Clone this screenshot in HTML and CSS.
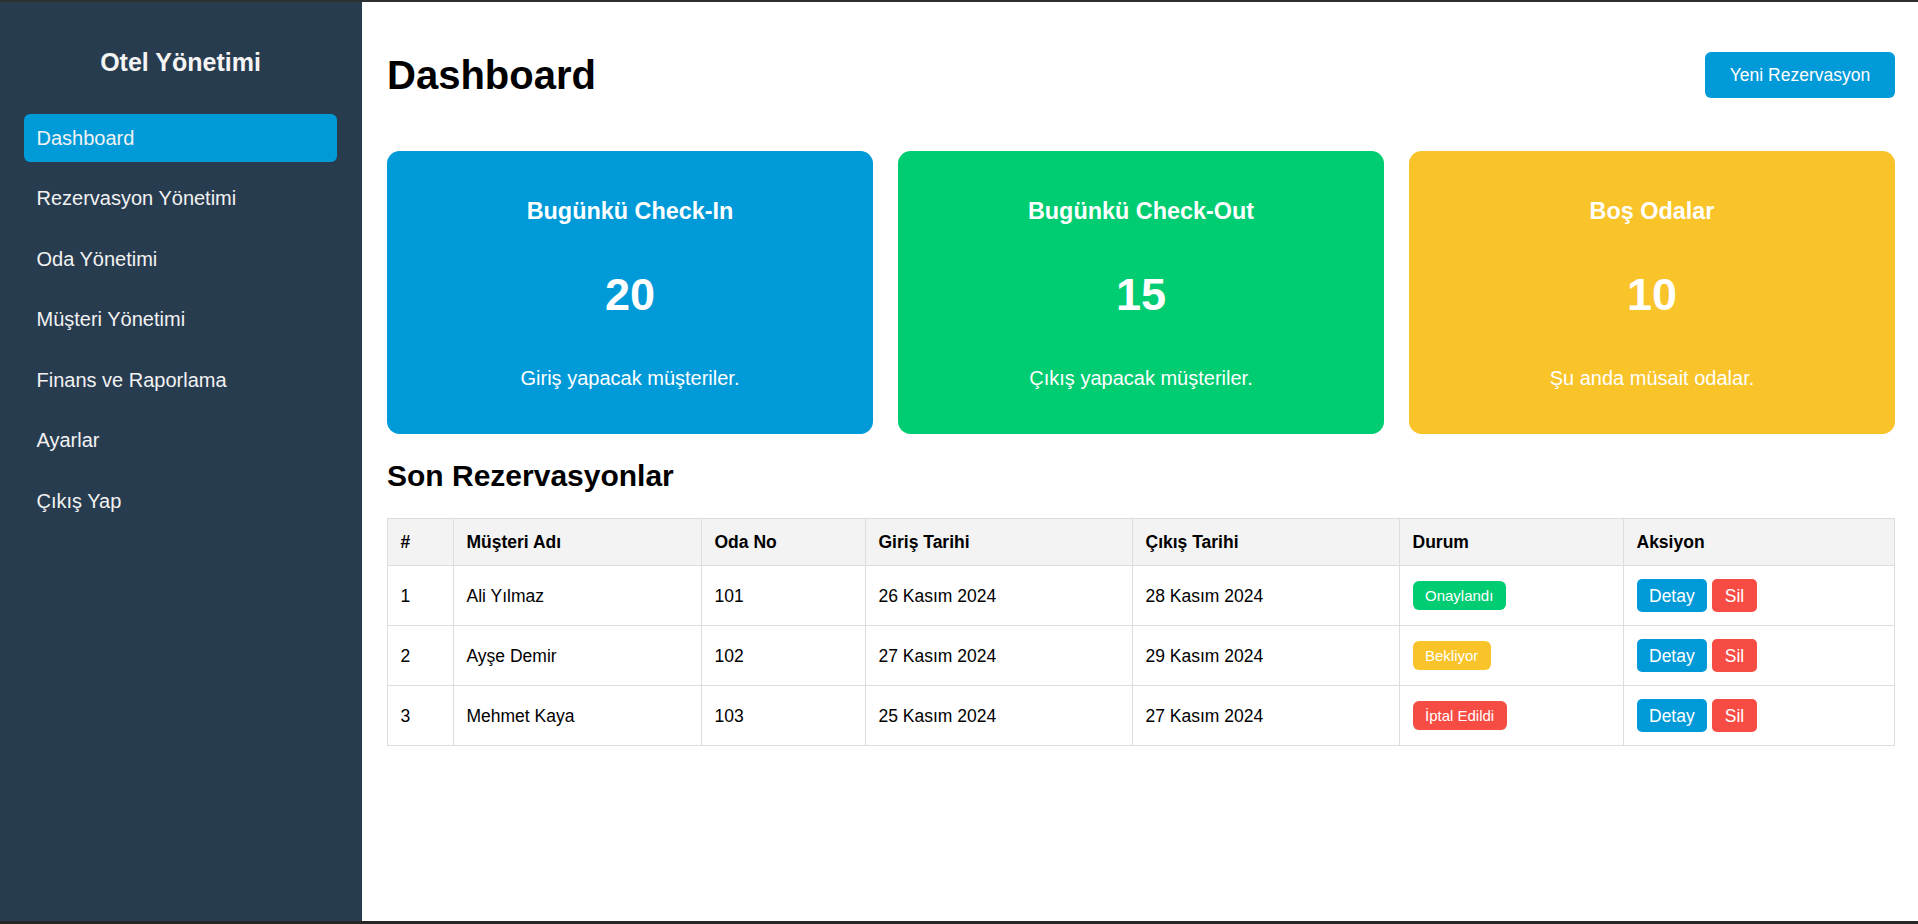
FILE: index.html
```html
<!DOCTYPE html>
<html lang="tr">
<head>
<meta charset="utf-8">
<title>Otel Yönetimi</title>
<link rel="stylesheet" href="styles.css">
</head>
<body>
<div class="app">
  <aside class="sidebar">
    <h2 class="brand">Otel Yönetimi</h2>
    <ul class="nav">
      <li class="nav-item active">Dashboard</li>
      <li class="nav-item">Rezervasyon Yönetimi</li>
      <li class="nav-item">Oda Yönetimi</li>
      <li class="nav-item">Müşteri Yönetimi</li>
      <li class="nav-item">Finans ve Raporlama</li>
      <li class="nav-item">Ayarlar</li>
      <li class="nav-item">Çıkış Yap</li>
    </ul>
  </aside>
  <main class="main">
    <header class="page-header">
      <h1 class="page-title">Dashboard</h1>
      <button class="btn-primary">Yeni Rezervasyon</button>
    </header>
    <section class="cards">
      <div class="card card-blue">
        <h3 class="card-title">Bugünkü Check-In</h3>
        <div class="card-number">20</div>
        <p class="card-desc">Giriş yapacak müşteriler.</p>
      </div>
      <div class="card card-green">
        <h3 class="card-title">Bugünkü Check-Out</h3>
        <div class="card-number">15</div>
        <p class="card-desc">Çıkış yapacak müşteriler.</p>
      </div>
      <div class="card card-yellow">
        <h3 class="card-title">Boş Odalar</h3>
        <div class="card-number">10</div>
        <p class="card-desc">Şu anda müsait odalar.</p>
      </div>
    </section>
    <h2 class="section-title">Son Rezervasyonlar</h2>
    <table class="res-table">
      <colgroup>
        <col class="c-num"><col class="c-name"><col class="c-room"><col class="c-in"><col class="c-out"><col class="c-status"><col class="c-act">
      </colgroup>
      <thead>
        <tr><th>#</th><th>Müşteri Adı</th><th>Oda No</th><th>Giriş Tarihi</th><th>Çıkış Tarihi</th><th>Durum</th><th>Aksiyon</th></tr>
      </thead>
      <tbody>
        <tr>
          <td>1</td><td>Ali Yılmaz</td><td>101</td><td>26 Kasım 2024</td><td>28 Kasım 2024</td>
          <td><span class="badge badge-green">Onaylandı</span></td>
          <td><button class="btn-sm btn-blue">Detay</button><button class="btn-sm btn-red">Sil</button></td>
        </tr>
        <tr>
          <td>2</td><td>Ayşe Demir</td><td>102</td><td>27 Kasım 2024</td><td>29 Kasım 2024</td>
          <td><span class="badge badge-yellow">Bekliyor</span></td>
          <td><button class="btn-sm btn-blue">Detay</button><button class="btn-sm btn-red">Sil</button></td>
        </tr>
        <tr>
          <td>3</td><td>Mehmet Kaya</td><td>103</td><td>25 Kasım 2024</td><td>27 Kasım 2024</td>
          <td><span class="badge badge-red">İptal Edildi</span></td>
          <td><button class="btn-sm btn-blue">Detay</button><button class="btn-sm btn-red">Sil</button></td>
        </tr>
      </tbody>
    </table>
  </main>
</div>
</body>
</html>
```

FILE: styles.css
```css
* { box-sizing: border-box; }

html, body {
  margin: 0;
  padding: 0;
  font-family: "Liberation Sans", Arial, sans-serif;
  background: #ffffff;
  color: #000000;
}

.app {
  display: flex;
  height: 924px;
  border-top: 2px solid #2e2f31;
  border-bottom: 3px solid #262626;
}

.sidebar {
  width: 362px;
  flex: none;
  background: #283c50;
  padding: 45px 25px 0 24px;
  color: #ffffff;
}

.brand {
  margin: 0 0 37px;
  font-size: 25px;
  line-height: 30px;
  font-weight: bold;
  text-align: center;
  color: #f4f4f4;
}

.nav {
  list-style: none;
  margin: 0;
  padding: 0;
}

.nav-item {
  font-size: 20px;
  line-height: 23px;
  padding: 12.5px 12.5px;
  margin-bottom: 12.5px;
  border-radius: 6px;
  color: #f2f2f2;
}

.nav-item.active {
  background: #009ad9;
}

.main {
  flex: 1;
  padding: 50px 24px 0 25px;
}

.page-header {
  display: flex;
  justify-content: space-between;
  align-items: center;
  height: 46px;
}

.page-title {
  margin: 0;
  font-size: 40px;
  line-height: 46px;
  font-weight: bold;
}

.btn-primary {
  font-family: "Liberation Sans", Arial, sans-serif;
  font-size: 17.5px;
  width: 190px;
  height: 46px;
  padding: 0;
  border: none;
  border-radius: 6px;
  background: #009ad9;
  color: #ffffff;
}

.cards {
  display: grid;
  grid-template-columns: repeat(3, 1fr);
  gap: 25px;
  margin-top: 52.5px;
}

.card {
  border-radius: 12.5px;
  padding: 46px 20px 44px;
  text-align: center;
  color: #ffffff;
}

.card-blue { background: #009ad9; }
.card-green { background: #00cc71; }
.card-yellow { background: #f9c32a; }

.card-title {
  margin: 0 0 44px;
  font-size: 23.4px;
  line-height: 28px;
  font-weight: bold;
}

.card-number {
  font-size: 45px;
  line-height: 52px;
  font-weight: bold;
  margin-bottom: 45px;
}

.card-desc {
  margin: 0;
  font-size: 20px;
  line-height: 24px;
}

.section-title {
  margin: 25px 0 25px;
  font-size: 30px;
  line-height: 34.5px;
  font-weight: bold;
}

.res-table {
  width: 100%;
  border-collapse: collapse;
  table-layout: fixed;
  font-size: 17.5px;
}

.c-num { width: 66px; }
.c-name { width: 248px; }
.c-room { width: 164px; }
.c-in { width: 267px; }
.c-out { width: 267px; }
.c-status { width: 224px; }
.c-act { width: 271px; }

.res-table th,
.res-table td {
  border: 1px solid #dddddd;
  padding: 13px 12.5px;
  text-align: left;
  vertical-align: middle;
  line-height: 20px;
}

.res-table th {
  background: #f3f3f3;
  font-weight: bold;
}

.badge {
  display: inline-block;
  font-size: 15px;
  line-height: 17px;
  padding: 6.25px 12.5px;
  border-radius: 6px;
  color: #ffffff;
}

.badge-green { background: #00cc71; }
.badge-yellow { background: #f9c32a; }
.badge-red { background: #f64c43; }

.btn-sm {
  font-family: "Liberation Sans", Arial, sans-serif;
  font-size: 17.5px;
  line-height: 20px;
  padding: 6.5px 12.5px;
  border: none;
  border-radius: 5px;
  color: #ffffff;
  margin-right: 5px;
  vertical-align: middle;
}

.btn-blue { background: #009ad9; }
.btn-red { background: #f64c43; }
```
